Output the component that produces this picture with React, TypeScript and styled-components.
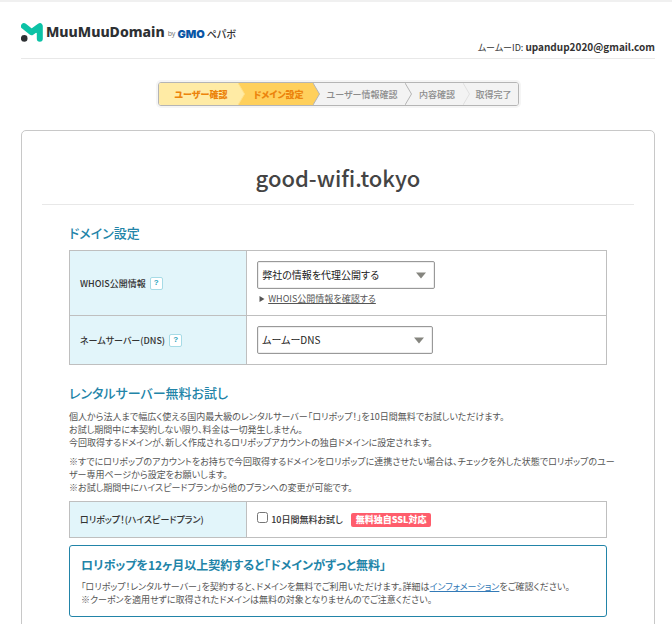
import React from "react";
import styled, { createGlobalStyle } from "styled-components";

const GlobalStyle = createGlobalStyle`
  *, *::before, *::after { box-sizing: border-box; }
  body {
    margin: 0;
    background: #fff;
    color: #333;
    font-family: "Noto Sans CJK JP", "Liberation Sans", sans-serif;
    font-size: 9px;
    line-height: 13px;
    font-feature-settings: "palt";
  }
  h1, h2, h3, p, ol { margin: 0; padding: 0; }
`;

const Page = styled.div`
  padding: 0 17px 24px 21px;
  border-top: 2px solid #f0f0f0;
`;

const Header = styled.header`
  display: flex;
  justify-content: space-between;
  align-items: flex-end;
  height: 57px;
  border-bottom: 1px solid #e8e8e8;
`;

const Logo = styled.a`
  display: flex;
  align-items: center;
  align-self: flex-start;
  margin-top: 19px;
  height: 22px;
  color: #2d3033;
  text-decoration: none;
`;

const LogoName = styled.span`
  margin-left: 3px;
  font: 800 14px/20px "Noto Sans", sans-serif;
`;

const LogoBy = styled.span`
  margin: 4px 2px 0 3px;
  color: #777;
  font: 7px/12px "Noto Sans", sans-serif;
`;

const GmoMark = styled.span`
  margin-top: 4px;
  color: #0a56a5;
  font: 900 11px/12px Inter, sans-serif;
`;

const LogoPepabo = styled.span`
  margin: 4px 0 0 2px;
  color: #333;
  font-weight: 500;
  font-size: 10px;
  line-height: 12px;
`;

const Account = styled.p`
  margin-bottom: 3px;
  font-size: 9px;
  line-height: 14px;

  strong {
    font-size: 10px;
    font-weight: 700;
  }
`;

const Steps = styled.ol`
  display: grid;
  grid-template-columns: 86px 75px 92px 58px 48px;
  width: max-content;
  height: 24px;
  margin: 23px auto 24px;
  border: 1px solid #b5b5b5;
  border-radius: 3px;
  overflow: hidden;
  list-style: none;
  box-shadow: 0 0 0 2px #f5f5f5;
`;

type StepState = "done" | "current" | "todo";
const stepFill = { done: "#ffeba5", current: "#ffd05c", todo: "#f3f3f3" };

const Step = styled.li<{ $state: StepState }>`
  display: flex;
  background: ${(p) => stepFill[p.$state]};
  color: ${(p) => (p.$state === "todo" ? "#8c8c8c" : "#ec840c")};
  font-weight: ${(p) => (p.$state === "todo" ? 500 : 800)};
  line-height: 23px;
  white-space: nowrap;
`;

const StepLabel = styled.span`
  flex: 1;
  text-align: center;

  ${Step}:first-child & { padding-left: 6px; }
`;

const Card = styled.main`
  border: 1px solid #c8c8c8;
  border-radius: 5px;
  padding: 30px 20px 40px;
`;

const DomainName = styled.h1`
  padding-bottom: 11px;
  border-bottom: 1px solid #e8e8e8;
  color: #444;
  font-size: 22px;
  font-weight: 500;
  line-height: 32px;
  text-align: center;
`;

const Content = styled.div`
  padding: 0 27px;
`;

const SectionTitle = styled.h2`
  padding: 19px 0 8px;
  color: #2284a8;
  font-size: 13px;
  font-weight: 500;
  line-height: 18px;
`;

const SettingsTable = styled.table`
  width: 100%;
  border-collapse: collapse;
  table-layout: fixed;
`;

const HeadCell = styled.th`
  width: 33%;
  padding: 0 10px;
  border: 1px solid #bfbfbf;
  background: #e2f5fa;
  font-weight: 500;
  text-align: left;
`;

const Cell = styled.td<{ $tight?: boolean }>`
  padding: ${(p) => (p.$tight ? "8px 10px" : "10px")};
  border: 1px solid #bfbfbf;
`;

const HeadLine = styled.div`
  display: flex;
  align-items: center;
  gap: 4px;
`;

const HelpButton = styled.button`
  width: 13px;
  height: 13px;
  padding: 0;
  border: 1px solid #a6dbe6;
  border-radius: 2px;
  background: #fff;
  color: #2aa3bb;
  font: 700 8px/10px "Liberation Sans", sans-serif;
`;

const SelectWrap = styled.div<{ $width: number }>`
  display: grid;
  align-items: center;
  width: ${(p) => p.$width}px;
  max-width: 100%;

  > * { grid-area: 1 / 1; }
  > svg {
    justify-self: end;
    margin-right: 9px;
    pointer-events: none;
  }
`;

const Select = styled.select`
  appearance: none;
  width: 100%;
  height: 28px;
  padding: 0 24px 0 4px;
  border: 1px solid #999;
  border-radius: 2px;
  box-shadow: inset 0 0 0 1px #eee;
  background: #fff;
  color: #222;
  font: 400 10px/16px "Noto Sans CJK JP", sans-serif;
  font-feature-settings: "palt";
`;

const DetailLine = styled.p`
  display: flex;
  align-items: center;
  gap: 3px;
  margin-top: 3px;
  padding-left: 2px;
`;

const DetailLink = styled.a`
  color: #555;
  text-underline-offset: 1px;
`;

const Text = styled.p`
  color: #555;
  white-space: nowrap;

  & + & { margin-top: 6px; }
`;

const TrialTable = styled(SettingsTable)`
  margin-top: 7px;
`;

const TrialLine = styled.div`
  display: flex;
  align-items: center;
  height: 19px;
`;

const TrialLabel = styled.label`
  display: flex;
  align-items: center;
  gap: 3px;
  font-weight: 500;

  input {
    width: 11px;
    height: 11px;
    margin: 0 0 4px;
  }
`;

const Badge = styled.span`
  margin-left: 8px;
  padding: 0 5px;
  border-radius: 2px;
  background: #ff5d6c;
  color: #fff;
  font-weight: 800;
  line-height: 14px;
`;

const Promo = styled.section`
  margin-top: 7px;
  padding: 10px 11px;
  border: 1px solid #2284a8;
  border-radius: 3px;
`;

const PromoTitle = styled.h3`
  margin-bottom: 6px;
  color: #2284a8;
  font-size: 12px;
  font-weight: 700;
  line-height: 18px;
`;

const InfoLink = styled.a`
  color: #337ab7;
  text-underline-offset: 1px;
`;

const LogoMark = () => (
  <svg width="22" height="19" viewBox="0 0 22 19" aria-hidden="true">
    <path
      d="M3 3.2 L10.5 9.2 L18.8 3.2 V15.8"
      fill="none"
      stroke="#0cc2a6"
      strokeWidth="6"
      strokeLinecap="round"
      strokeLinejoin="round"
    />
    <path d="M10 8 L18.8 3.2 V11Z" fill="#0cc2a6" />
    <circle cx="3.2" cy="15.4" r="3.3" fill="#2d3033" />
  </svg>
);

const StepArrow = ({ fill, next, line }: { fill: string; next: string; line: string }) => (
  <svg width="7" height="22" viewBox="0 0 7 22" aria-hidden="true">
    <rect width="7" height="22" fill={next} />
    <path d="M0 0 L6.5 11 L0 22Z" fill={fill} />
    <path d="M0 0 L6.5 11 L0 22" fill="none" stroke={line} />
  </svg>
);

const DownArrow = () => (
  <svg width="10" height="7" viewBox="0 0 10 7" aria-hidden="true">
    <path d="M0 0.5H10L5 6.5Z" fill="#85857f" />
  </svg>
);

const RightArrow = () => (
  <svg width="6" height="6" viewBox="0 0 6 6" aria-hidden="true">
    <path d="M0.5 0V6L5.5 3Z" fill="#555" />
  </svg>
);

const steps: { label: string; state: StepState; line?: string }[] = [
  { label: "ユーザー確認", state: "done", line: "#ffe08a" },
  { label: "ドメイン設定", state: "current", line: "#b5b5b5" },
  { label: "ユーザー情報確認", state: "todo", line: "#b5b5b5" },
  { label: "内容確認", state: "todo", line: "#e0e0e0" },
  { label: "取得完了", state: "todo" },
];

export default function App() {
  return (
    <>
      <GlobalStyle />
      <Page lang="ja">
        <Header>
          <Logo href="#">
            <LogoMark />
            <LogoName>MuuMuuDomain</LogoName>
            <LogoBy>by</LogoBy>
            <GmoMark>GMO</GmoMark>
            <LogoPepabo>ペパボ</LogoPepabo>
          </Logo>
          <Account>
            ムームーID: <strong>upandup2020@gmail.com</strong>
          </Account>
        </Header>

        <Steps>
          {steps.map((s, i) => (
            <Step key={s.label} $state={s.state} aria-current={s.state === "current" ? "step" : undefined}>
              <StepLabel>{s.label}</StepLabel>
              {s.line && (
                <StepArrow fill={stepFill[s.state]} next={stepFill[steps[i + 1].state]} line={s.line} />
              )}
            </Step>
          ))}
        </Steps>

        <Card>
          <DomainName>good-wifi.tokyo</DomainName>
          <Content>
            <SectionTitle>ドメイン設定</SectionTitle>
            <SettingsTable>
              <tbody>
                <tr>
                  <HeadCell scope="row">
                    <HeadLine>
                      <label htmlFor="whois">WHOIS公開情報</label>
                      <HelpButton type="button">?</HelpButton>
                    </HeadLine>
                  </HeadCell>
                  <Cell>
                    <SelectWrap $width={178}>
                      <Select id="whois">
                        <option>弊社の情報を代理公開する</option>
                      </Select>
                      <DownArrow />
                    </SelectWrap>
                    <DetailLine>
                      <RightArrow />
                      <DetailLink href="#">WHOIS公開情報を確認する</DetailLink>
                    </DetailLine>
                  </Cell>
                </tr>
                <tr>
                  <HeadCell scope="row">
                    <HeadLine>
                      <label htmlFor="dns">ネームサーバー(DNS)</label>
                      <HelpButton type="button">?</HelpButton>
                    </HeadLine>
                  </HeadCell>
                  <Cell>
                    <SelectWrap $width={176}>
                      <Select id="dns">
                        <option>ムームーDNS</option>
                      </Select>
                      <DownArrow />
                    </SelectWrap>
                  </Cell>
                </tr>
              </tbody>
            </SettingsTable>

            <SectionTitle>レンタルサーバー無料お試し</SectionTitle>
            <Text>
              個人から法人まで幅広く使える国内最大級のレンタルサーバー「ロリポップ！」を10日間無料でお試しいただけます。
              <br />
              お試し期間中に本契約しない限り、料金は一切発生しません。
              <br />
              今回取得するドメインが、新しく作成されるロリポップアカウントの独自ドメインに設定されます。
            </Text>
            <Text>
              ※すでにロリポップのアカウントをお持ちで今回取得するドメインをロリポップに連携させたい場合は、チェックを外した状態でロリポップのユー
              <br />
              ザー専用ページから設定をお願いします。
              <br />
              ※お試し期間中にハイスピードプランから他のプランへの変更が可能です。
            </Text>

            <TrialTable>
              <tbody>
                <tr>
                  <HeadCell scope="row">ロリポップ！(ハイスピードプラン)</HeadCell>
                  <Cell $tight>
                    <TrialLine>
                      <TrialLabel>
                        <input type="checkbox" />
                        10日間無料お試し
                      </TrialLabel>
                      <Badge>無料独自SSL対応</Badge>
                    </TrialLine>
                  </Cell>
                </tr>
              </tbody>
            </TrialTable>

            <Promo>
              <PromoTitle>ロリポップを12ヶ月以上契約すると「ドメインがずっと無料」</PromoTitle>
              <Text as="div">
                「ロリポップ！レンタルサーバー」を契約すると、ドメインを無料でご利用いただけます。詳細は
                <InfoLink href="#">インフォメーション</InfoLink>をご確認ください。
                <br />
                ※クーポンを適用せずに取得されたドメインは無料の対象となりませんのでご注意ください。
              </Text>
            </Promo>
          </Content>
        </Card>
      </Page>
    </>
  );
}
